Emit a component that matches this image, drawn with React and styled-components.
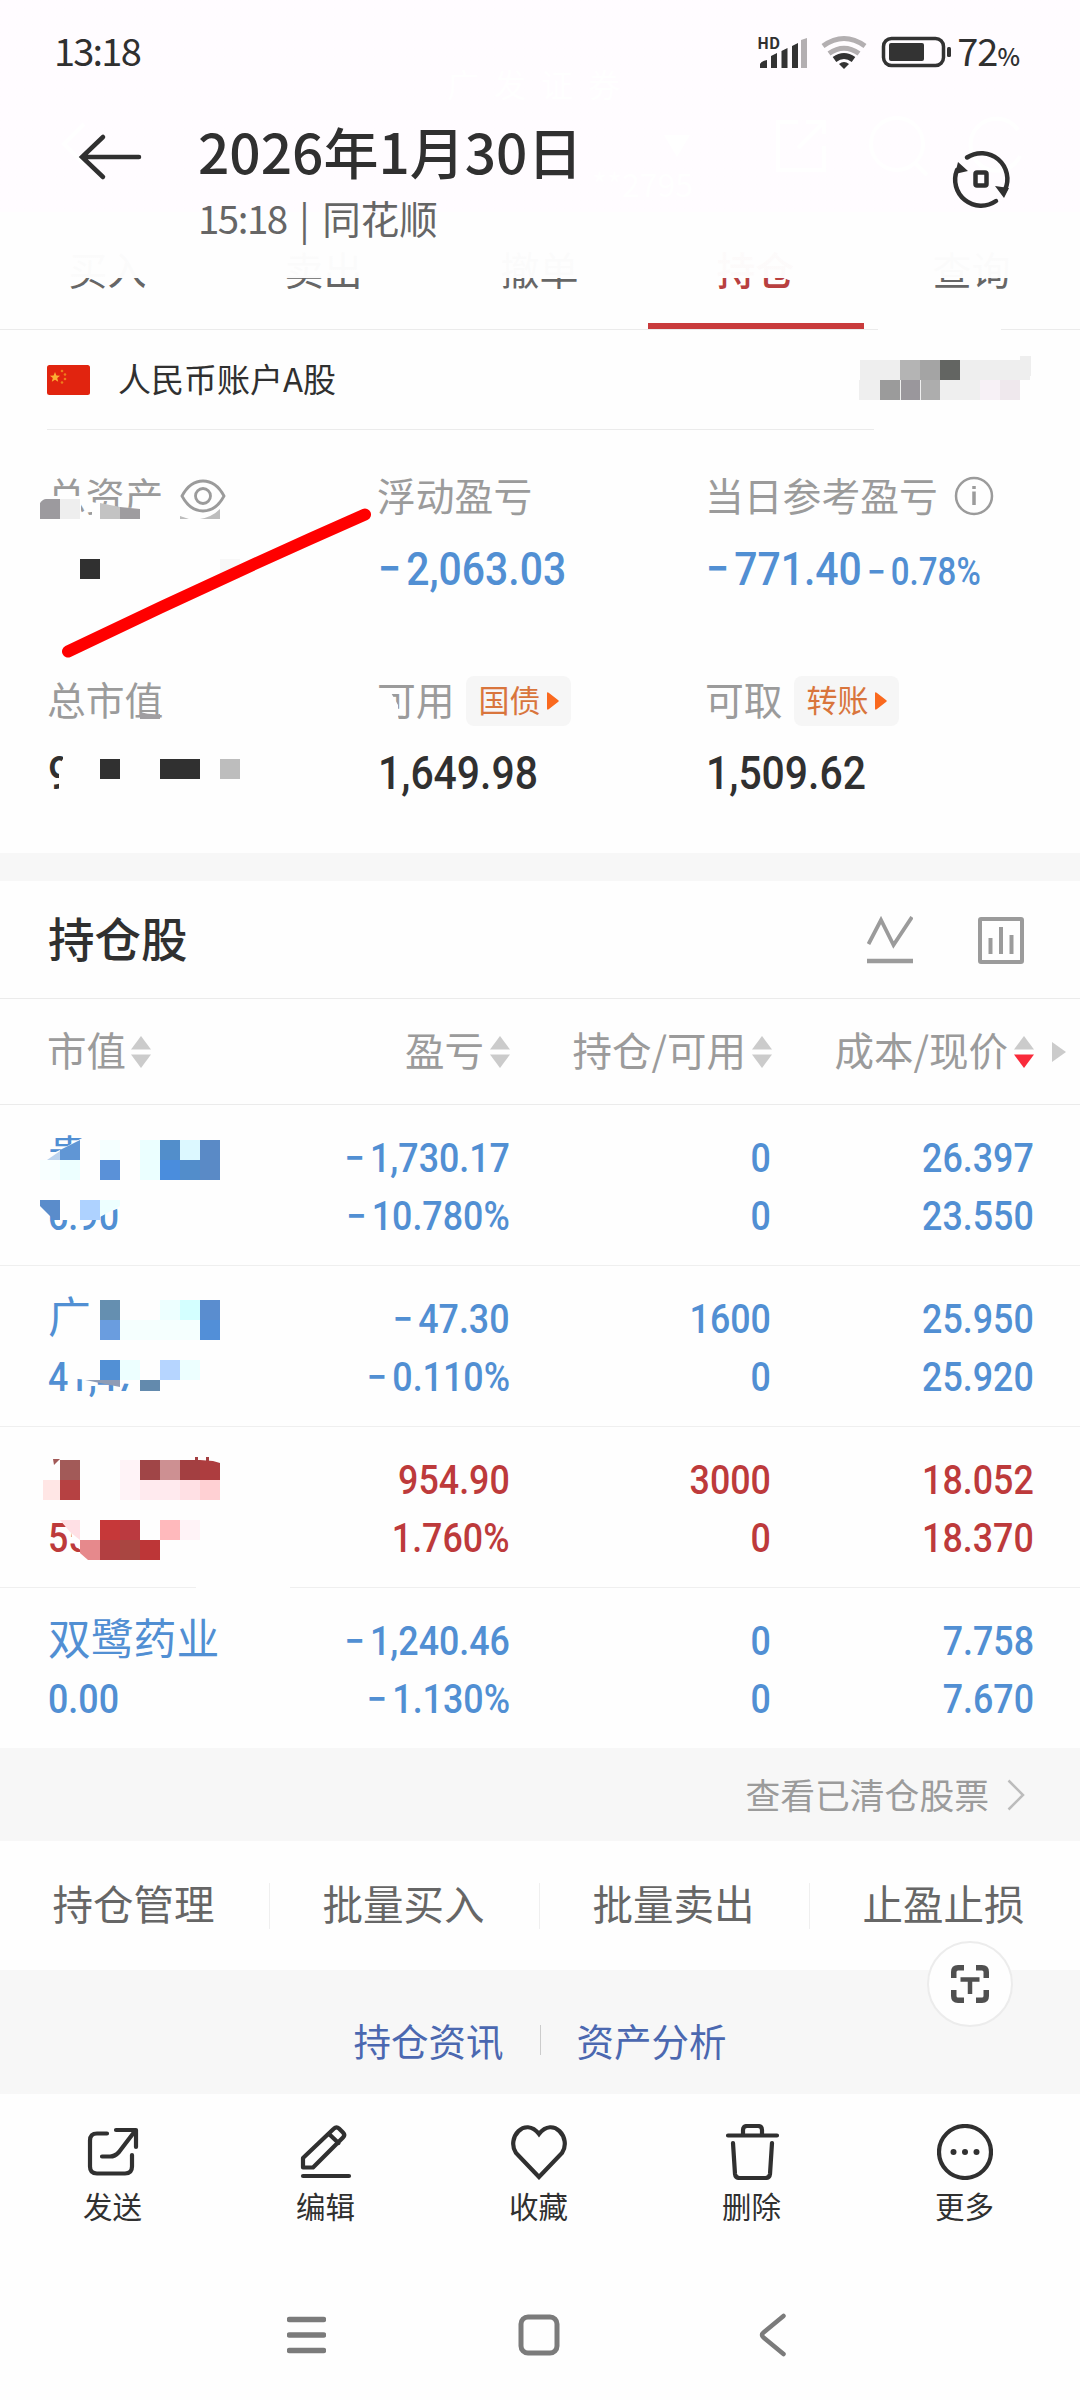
import React from "react";
import styled, { createGlobalStyle } from "styled-components";

const BLUE = "#518fd3";
const RED = "#bd3a3b";

const tabs = ["买入", "卖出", "撤单", "持仓", "查询"];

const columns = [
  { label: "市值" },
  { label: "盈亏" },
  { label: "持仓/可用" },
  { label: "成本/现价", sorted: true },
];

// mosaic blocks are [x, y, width, height, color], relative to the row
const holdings = [
  {
    name: "贵",
    value: "6.90",
    profit: ["−1,730.17", "−10.780%"],
    amount: ["0", "0"],
    price: ["26.397", "23.550"],
    masks: ["40,56 47,51 60,45 84,32 120,26 120,75 40,75", "50,94 120,94 119,103 90,115 55,115"],
    blocks: [
      [100, 35, 20, 20, "#f5ffff"],
      [140, 35, 20, 40, "#ebffff"],
      [160, 35, 20, 20, "#528ecb"],
      [180, 35, 20, 20, "#dcf8ff"],
      [200, 35, 20, 40, "#5a8ac6"],
      [40, 55, 20, 20, "#f8ffff"],
      [60, 55, 20, 20, "#edffff"],
      [100, 55, 20, 20, "#5a91d8"],
      [160, 55, 20, 20, "#4a8ddd"],
      [180, 55, 20, 20, "#528dcb"],
      [80, 95, 20, 20, "#aed2ff"],
    ],
    shapes: [
      ["60,45 80,35 80,55 60,55", "#6096d5"],
      ["47,55 60,46 60,55", "#bdd3ee"],
      ["40,95 60,95 60,115 54,115 40,101", "#5a8ccb"],
      ["100,95 120,95 120,101 100,112", "#edffff"],
    ],
  },
  {
    name: "广",
    value: "41,47",
    profit: ["−47.30", "−0.110%"],
    amount: ["1600", "0"],
    price: ["25.950", "25.920"],
    masks: ["70,90 150,90 150,120 78,113 70,112"],
    blocks: [
      [100, 34, 20, 20, "#658fb0"],
      [160, 34, 20, 20, "#edffff"],
      [180, 34, 20, 20, "#d3ffff"],
      [200, 34, 20, 20, "#5a8dcf"],
      [100, 54, 20, 20, "#6a9ddf"],
      [120, 54, 80, 20, "#f5fffe"],
      [200, 54, 20, 20, "#528fd8"],
      [100, 94, 20, 20, "#5290d5"],
      [120, 94, 20, 20, "#edffff"],
      [160, 94, 20, 20, "#b6d5ff"],
      [180, 94, 20, 20, "#edffff"],
      [140, 114, 20, 11, "#638aad"],
    ],
    shapes: [["85,114 120,114 120,121", "#8f9cb5"]],
  },
  {
    up: true,
    name: "",
    value: "55",
    profit: ["954.90", "1.760%"],
    amount: ["3000", "0"],
    price: ["18.052", "18.370"],
    masks: ["60,93 100,93 100,132 79,122 72,113 71,104"],
    blocks: [
      [60, 33, 20, 20, "#a25a58"],
      [120, 33, 20, 40, "#fff3f7"],
      [140, 33, 20, 20, "#a04547"],
      [160, 33, 20, 20, "#cd9092"],
      [180, 33, 20, 20, "#a33f41"],
      [43, 53, 17, 20, "#ffe6e5"],
      [60, 53, 20, 20, "#b64142"],
      [140, 53, 40, 20, "#ffeaee"],
      [180, 53, 20, 20, "#ffe0e4"],
      [200, 53, 20, 20, "#ffd0d3"],
      [195, 30, 3, 4, "#a33f41"],
      [206, 30, 3, 4, "#a33f41"],
      [100, 93, 20, 20, "#c63839"],
      [120, 93, 20, 20, "#bb3a40"],
      [160, 93, 20, 20, "#ffb9bc"],
      [180, 93, 20, 20, "#fff3f7"],
      [100, 113, 20, 20, "#b23f41"],
      [120, 113, 20, 20, "#a94641"],
      [140, 113, 20, 20, "#bd3637"],
    ],
    shapes: [
      ["53,32 60,32 54,38", "#a25a58"],
      ["200,33 213,34 220,36 220,53 200,53", "#ad3d3f"],
      ["60,93 80,93 80,113 70,105", "#ffe0e5"],
      ["80,113 100,113 100,133 88,133 80,126", "#e6898c"],
    ],
  },
  {
    name: "双鹭药业",
    value: "0.00",
    profit: ["−1,240.46", "−1.130%"],
    amount: ["0", "0"],
    price: ["7.758", "7.670"],
  },
];

function Mosaic({ width, height, masks = [], blocks = [], shapes = [] }) {
  return (
    <Overlay width={width} height={height}>
      {masks.map((points) => (
        <polygon key={points} points={points} fill="#fefefe" />
      ))}
      {blocks.map(([x, y, w, h, fill]) => (
        <rect key={`${x}-${y}`} x={x} y={y} width={w} height={h} fill={fill} />
      ))}
      {shapes.map(([points, fill]) => (
        <polygon key={points} points={points} fill={fill} />
      ))}
    </Overlay>
  );
}

// the minus sign is set a little wider than the digits
function Signed({ text }) {
  if (!text.startsWith("−")) return text;
  return (
    <>
      <Minus>−</Minus>
      {text.slice(1)}
    </>
  );
}

function Figure({ children, small, ...rest }) {
  return (
    <Num {...rest}>
      <Signed text={children} />
      {small && (
        <small>
          <Signed text={small} />
        </small>
      )}
    </Num>
  );
}

function StatusIcons() {
  return (
    <svg width="196" height="40" viewBox="757 32 196 40" fill="none">
      <g fill="#333">
        <path d="M760 68v-4q1-3 7-4v8zM771 68V56l6-3v15zM781.500 68V51l6-3v20zM792 68V46l6-3v25z" />
        <path d="M801 68V40l6-2v30z" fill="#b3afb1" />
      </g>
      <g strokeWidth="5">
        <path d="M823 46q21-15 42 0" stroke="#b3afb1" />
        <path d="M829 53.500q15-10.500 30 0" stroke="#b3afb1" />
        <path d="M834.500 59.500q9.500-7 19 0" stroke="#333" strokeWidth="6" />
        <path d="M839 64q5-4 10 0l-5 5z" fill="#333" />
      </g>
      <rect x="883.500" y="38.500" width="60" height="27" rx="8" stroke="#333" strokeWidth="3.500" />
      <rect x="889" y="43" width="35" height="18" rx="2" fill="#333" />
      <rect x="947" y="47" width="4" height="10" rx="1.500" fill="#333" />
    </svg>
  );
}

function SortArrows({ sorted }) {
  return (
    <svg width="20" height="32" viewBox="0 0 20 32">
      <path d="M10 0l10 13.500H0z" fill="#cbcbcb" />
      <path d="M0 18.500h20L10 32z" fill={sorted ? "#f92a3a" : "#cbcbcb"} />
    </svg>
  );
}

function Caret() {
  return (
    <svg width="12" height="18" viewBox="0 0 12 18">
      <path d="M0 1.500Q0-.5 2 1l9 7q1.500 1 0 2l-9 7q-2 1.500-2-.5z" fill="#fa691e" />
    </svg>
  );
}

const tools = [
  {
    label: "发送",
    icon: (
      <>
        <path d="M22 9.500h-10q-7 0-7 7v26q0 7 7 7h28q7 0 7-7V31" />
        <path d="M31 6h20V23M50 7L34 28q-4 4.500-9 4.500h-8" />
      </>
    ),
  },
  {
    label: "编辑",
    icon: (
      <>
        <path d="M5 43.500V34L36 4.500q2.500-2.500 5 0l4 4q2.500 2.500 0 5L15 43.500zM31 10l9.500 9" />
        <path d="M5 52h46" />
      </>
    ),
  },
  {
    label: "收藏",
    icon: <path d="M28 53L5 29C-5 14 14-8 28 10C42-8 61 14 51 29z" strokeLinejoin="miter" />,
  },
  {
    label: "删除",
    icon: <path d="M4 11.500h49M19 10V6q0-4 4-4h11q4 0 4 4v4M9 19l2 31q.5 4 4.500 4h26q4 0 4.500-4l2-31" />,
  },
  {
    label: "更多",
    icon: (
      <>
        <circle cx="28" cy="28" r="26" />
        <g fill="#303030" stroke="none">
          <circle cx="16.500" cy="28" r="3" />
          <circle cx="28" cy="28" r="3" />
          <circle cx="39.500" cy="28" r="3" />
        </g>
      </>
    ),
  },
];

export default function App() {
  return (
    <Page>
      <GlobalStyle />
      <Header>
        {/* page underneath, barely visible through the bar */}
        <Overlay width="1080" height="212" fill="none" stroke="#fff" strokeWidth="4">
          <path d="M664 135h26l-13 22z" fill="#fff" stroke="none" />
          <path d="M798 122h-20v48h46v-24M806 122h18v12M824 122l-26 26" />
          <circle cx="897" cy="144" r="26" />
          <path d="M915 163l12 12M1018 130a26 26 0 1 0 2 26M84 124l-20 20 20 20" />
        </Overlay>
        <Broker>广发证券</Broker>
        <BrokerAccount>**2795</BrokerAccount>
        <StatusBar>
          <Clock>13:18</Clock>
          <StatusRight>
            <Hd>HD</Hd>
            <StatusIcons />
            <Battery>
              72<small>%</small>
            </Battery>
          </StatusRight>
        </StatusBar>
        <TitleBar>
          <svg width="66" height="50" viewBox="0 0 66 50" fill="none" stroke="#303030" strokeWidth="4.500">
            <path d="M61 25H4M25 5L4 25l21 20" strokeLinecap="round" />
          </svg>
          <Titles>
            <h1>2026年1月30日</h1>
            <p>
              <span>15:18</span> | 同花顺
            </p>
          </Titles>
          <svg width="60" height="60" viewBox="-30 -30 60 60" fill="none" stroke="#303030" strokeWidth="4.500">
            <path d="M-14-21.500A26 26 0 0 1 24 11M15 22A26 26 0 0 1-24-9" strokeLinecap="round" />
            <path d="M14 7l14 2-5 10zM-23-17l10 9-13 3z" fill="#303030" stroke="none" />
            <rect x="-5.500" y="-6.500" width="11" height="13" rx="1.500" />
          </svg>
        </TitleBar>
      </Header>

      <Tabs>
        {tabs.map((tab) => (
          <Tab key={tab} $active={tab === "持仓"}>
            {tab}
          </Tab>
        ))}
        <TabGap />
      </Tabs>

      <Account>
        <svg width="43" height="30" viewBox="0 0 43 30">
          <rect width="43" height="30" rx="2.500" fill="#e1240f" />
          <path d="M8 7l1.400 3.500 3.700.2-2.900 2.400 1 3.600L8 14.700l-3.200 2 1-3.600-2.900-2.400 3.700-.2z" fill="#fbb034" />
          <g fill="#ee7d1c">
            <circle cx="15" cy="6" r="1.300" />
            <circle cx="18" cy="9.500" r="1.300" />
            <circle cx="18" cy="14" r="1.300" />
            <circle cx="15" cy="17.500" r="1.300" />
          </g>
        </svg>
        <span>人民币账户A股</span>
        <Mosaic
          width={1080}
          height={100}
          blocks={[
            [860, 30, 170, 20, "#eee"],
            [1020, 26, 11, 20, "#eee"],
            [900, 30, 20, 20, "#b4b4b4"],
            [920, 30, 20, 20, "#a4a4a4"],
            [940, 30, 20, 20, "#636562"],
            [859, 50, 121, 20, "#efefef"],
            [880, 50, 20, 20, "#9b9b9b"],
            [901, 50, 19, 20, "#9a979c"],
            [921, 50, 19, 20, "#adadad"],
            [980, 50, 20, 20, "#f7f1f6"],
            [1000, 50, 20, 20, "#efe8ed"],
          ]}
        />
      </Account>

      <Assets>
        <Asset>
          <Label>
            总资产
            <Eye width="46" height="34" viewBox="0 0 46 34" fill="none" stroke="#9b9b9b" strokeWidth="2.800">
              <path d="M2 17Q10 2 23 2t21 15Q36 32 23 32T2 17z" />
              <circle cx="23" cy="17" r="7.500" />
            </Eye>
          </Label>
        </Asset>
        <Asset>
          <Label>浮动盈亏</Label>
          <Amount $color={BLUE}>
            <Figure $squeeze={0.87}>−2,063.03</Figure>
          </Amount>
        </Asset>
        <Asset>
          <Label>
            当日参考盈亏
            <Info width="40" height="40" viewBox="-20 -20 40 40" fill="none" stroke="#9b9b9b" strokeWidth="2.500">
              <circle r="18" />
              <path d="M0-4.500V9M0-10v3" strokeWidth="3.500" />
            </Info>
          </Label>
          <Amount $color={BLUE}>
            <Figure $squeeze={0.87} small="−0.78%">
              −771.40
            </Figure>
          </Amount>
        </Asset>
        <Asset>
          <Label>总市值</Label>
          <Amount>
            <Figure $squeeze={0.87}>9</Figure>
          </Amount>
        </Asset>
        <Asset>
          <Label>
            可用
            <Badge>
              国债 <Caret />
            </Badge>
          </Label>
          <Amount>
            <Figure $squeeze={0.87}>1,649.98</Figure>
          </Amount>
        </Asset>
        <Asset>
          <Label>
            可取
            <Badge>
              转账 <Caret />
            </Badge>
          </Label>
          <Amount>
            <Figure $squeeze={0.87}>1,509.62</Figure>
          </Amount>
        </Asset>
        {/* blurred amounts and the red pen stroke */}
        <Overlay width="1080" height="423" viewBox="0 430 1080 423">
          <path
            d="M46 497h35v25H46zM92 503l30 6 40-1v14H92zM130 509h34v10h-34zM63 750v10l-4 6v26h24v-42zM376 692l14 0 8 14v14h-22zM183 517h40v6h-40z"
            fill="#fefefe"
          />
          <path d="M40 504q3-4 6-4h14v20H40z" fill="#9c9a9e" />
          <path d="M60 500h20v20H60z" fill="#eee" />
          <path d="M100 504l20 4v12h-20z" fill="#c3c3c3" />
          <path d="M120 508l20 2v10h-20z" fill="#9e9c9f" />
          <path d="M180 517l9 3h-9zM200 520q12-2 20-10v10z" fill="#bdbdbd" />
          <path d="M140 713q10 3 20 2v5h-20z" fill="#a09ea1" />
          <path d="M80 560h20v20H80zM100 760h20v20h-20zM160 760h40v20h-40z" fill="#303030" />
          <path d="M220 760h20v20h-20z" fill="#bdbdbd" />
          <path d="M220 560h20v20h-20z" fill="#f7f7f7" />
          <path d="M68 652.500Q214 582 365 515.500" fill="none" stroke="#f00" strokeWidth="12" strokeLinecap="round" />
        </Overlay>
      </Assets>

      <HoldingsTitle>
        <h2>持仓股</h2>
        <svg width="46" height="48" viewBox="0 0 46 48" fill="none" stroke="#9b9b9b" strokeWidth="3.800">
          <path d="M1.500 28L14 4l12.500 25L45 1" />
          <path d="M0 45h46" strokeWidth="4.500" />
        </svg>
        <svg width="46" height="48" viewBox="0 0 46 48" fill="none" stroke="#9b9b9b" strokeWidth="4">
          <rect x="2" y="3" width="42" height="43" rx="1" />
          <path d="M12.500 22v16M23 11v27M33.500 19v19" />
        </svg>
      </HoldingsTitle>

      <TableHead>
        {columns.map(({ label, sorted }) => (
          <HeadCell key={label}>
            <span>{label}</span>
            <SortArrows sorted={sorted} />
          </HeadCell>
        ))}
        <svg width="14" height="20" viewBox="0 0 14 20">
          <path d="M0 0l14 10L0 20z" fill="#cbcbcb" />
        </svg>
      </TableHead>

      {holdings.map((row) => (
        <Row key={row.value} $color={row.up ? RED : BLUE}>
          <Cell $left>
            <Name>{row.name}</Name>
            <Figure $squeeze={0.895}>{row.value}</Figure>
          </Cell>
          {[row.profit, row.amount, row.price].map(([top, bottom], i) => (
            <Cell key={i}>
              <Figure $squeeze={0.895} $right>{top}</Figure>
              <Figure $squeeze={0.895} $right>{bottom}</Figure>
            </Cell>
          ))}
          {row.blocks && (
            <Mosaic width={240} height={160} masks={row.masks} blocks={row.blocks} shapes={row.shapes} />
          )}
          {row.up && <LineGap />}
        </Row>
      ))}

      <Cleared>
        <span>查看已清仓股票</span>
        <svg width="18" height="32" viewBox="0 0 18 32" fill="none" stroke="#bcbcbc" strokeWidth="2.500">
          <path d="M1.500 1.500L16 16 1.500 30.500" />
        </svg>
      </Cleared>

      <Actions>
        {["持仓管理", "批量买入", "批量卖出", "止盈止损"].map((label) => (
          <Action key={label}>{label}</Action>
        ))}
      </Actions>

      <Links>
        <a>持仓资讯</a>
        <a>资产分析</a>
        <ScanButton>
          <svg width="38" height="38" viewBox="0 0 38 38" fill="none" stroke="#505050" strokeWidth="5.500">
            <path d="M2.750 13V7q0-4.250 4.250-4.250h6M25 2.750h6q4.250 0 4.250 4.250v6M35.250 25v6q0 4.250-4.250 4.250h-6M13 35.250H7q-4.250 0-4.250-4.250v-6" />
            <path d="M9.500 14.500h19M19 14v15" strokeWidth="4.500" />
          </svg>
        </ScanButton>
      </Links>

      <Toolbar>
        {tools.map(({ label, icon }) => (
          <Tool key={label}>
            <svg
              width="56"
              height="56"
              viewBox="0 0 56 56"
              fill="none"
              stroke="#303030"
              strokeWidth="4.200"
              strokeLinecap="round"
              strokeLinejoin="round"
            >
              {icon}
            </svg>
            {label}
          </Tool>
        ))}
      </Toolbar>

      <NavBar>
        <svg width="39" height="44" viewBox="0 0 39 44" stroke="#7b7b7b" strokeWidth="5.500" strokeLinecap="round">
          <path d="M2.500 6.500h34M2.500 22h34M2.500 37.500h34" />
        </svg>
        <svg width="42" height="42" viewBox="0 0 42 42" fill="none" stroke="#7b7b7b" strokeWidth="5">
          <rect x="3" y="3" width="36" height="36" rx="7" />
        </svg>
        <svg width="27" height="44" viewBox="0 0 27 44" fill="none" stroke="#7b7b7b" strokeWidth="4.500">
          <path d="M24.500 3L4.500 19.500q-3 2.500 0 5L24.500 41" strokeLinecap="round" />
        </svg>
      </NavBar>
    </Page>
  );
}

const GlobalStyle = createGlobalStyle`
  body {
    margin: 0;
    background: #fefefe;
  }
`;

const Page = styled.div`
  width: 1080px;
  height: 2400px;
  overflow: hidden;
  background: #fefefe;
  color: #303030;
  font-family: "Noto Sans CJK SC", sans-serif;
  svg {
    display: block;
    flex-shrink: 0;
  }
`;

const Header = styled.header`
  position: relative;
  z-index: 1;
  box-sizing: border-box;
  height: 278px;
  background: linear-gradient(rgba(255, 252, 255, 0.98) 212px, rgba(254, 254, 254, 0.98) 212px);
`;

const Broker = styled.span`
  position: absolute;
  left: 447px;
  top: 60px;
  color: #fff;
  font-size: 32px;
  letter-spacing: 15px;
  line-height: 46px;
`;

const BrokerAccount = styled(Broker)`
  left: 592px;
  top: 160px;
  letter-spacing: 0;
`;

const StatusBar = styled.div`
  position: relative;
  display: flex;
  justify-content: space-between;
  padding: 32px 61px 0 54px;
  height: 40px;
  line-height: 40px;
  font-size: 38px;
`;

const Clock = styled.span`
  letter-spacing: -1.8px;
  line-height: 36px;
`;

const StatusRight = styled.div`
  position: relative;
  display: flex;
`;

const Hd = styled.span`
  position: absolute;
  left: 0;
  top: 2px;
  font: 700 15.5px/16px "Noto Sans CJK SC", sans-serif;
`;

const Battery = styled.span`
  display: flex;
  margin-left: 4px;
  letter-spacing: -1px;
  line-height: 36px;
  small {
    font-size: 24px;
    font-weight: 500;
    line-height: 47px;
  }
`;

const TitleBar = styled.div`
  position: relative;
  display: flex;
  padding: 60px 69px 0 78px;
  > svg:last-child {
    margin-top: 17px;
  }
`;

const Titles = styled.div`
  flex: 1;
  margin: -17px 0 0 54px;
  h1 {
    margin: 0;
    font-size: 55px;
    font-weight: 500;
    line-height: 70px;
  }
  p {
    margin: 4px 0 0;
    color: #666;
    font-size: 38.5px;
    line-height: 56px;
    white-space: pre;
    word-spacing: 4px;
  }
  span {
    letter-spacing: -1.5px;
  }
`;

const Tabs = styled.nav`
  position: relative;
  display: flex;
  box-sizing: border-box;
  height: 100px;
  margin-top: -48px;
  border-bottom: 1px solid #ebebeb;
`;

const Tab = styled.div`
  box-sizing: border-box;
  flex: 1;
  padding-right: 1px;
  border-bottom: 6px solid ${({ $active }) => ($active ? "#c93b3c" : "transparent")};
  color: ${({ $active }) => ($active ? "#b84040" : "#666")};
  font-size: 39px;
  font-weight: ${({ $active }) => ($active ? 500 : 400)};
  line-height: 77px;
  text-align: center;
`;

const TabGap = styled.i`
  position: absolute;
  left: 878px;
  bottom: -1px;
  width: 123px;
  height: 2px;
  background: #fefefe;
`;

const Account = styled.div`
  position: relative;
  display: flex;
  align-items: center;
  gap: 28px;
  height: 99px;
  padding-left: 47px;
  font-size: 33px;
  line-height: 46px;
  > span {
    margin-top: -4px;
  }
  &::after {
    content: "";
    position: absolute;
    left: 47px;
    bottom: -1px;
    width: 827px;
    height: 1px;
    background: #ebebeb;
  }
`;

const Overlay = styled.svg`
  position: absolute;
  left: 0;
  top: 0;
`;

const Assets = styled.section`
  position: relative;
  display: grid;
  grid-template-columns: 330px 328px 1fr;
  grid-template-rows: 204px 1fr;
  box-sizing: border-box;
  height: 424px;
  padding: 38px 0 0 47px;
`;

const Asset = styled.div`
  display: flex;
  flex-direction: column;
  gap: 20px;
`;

const Label = styled.div`
  display: flex;
  align-items: center;
  height: 54px;
  color: #9b9b9b;
  font-size: 38.8px;
  line-height: 54px;
  white-space: nowrap;
`;

const Eye = styled.svg`
  margin: 4px 0 0 17px;
`;

const Info = styled.svg`
  margin: 3px 0 0 16px;
`;

const Badge = styled.span`
  display: flex;
  align-items: center;
  box-sizing: border-box;
  width: 105px;
  height: 50px;
  margin: 5px 0 0 11px;
  padding: 0 0 3px 13px;
  border-radius: 8px;
  background: #f6f6f6;
  color: #d9753c;
  font-size: 31px;
  line-height: 44px;
  svg {
    margin: 3px 0 0 6px;
  }
`;

const Num = styled.span`
  display: block;
  width: max-content;
  font-family: Roboto, sans-serif;
  font-weight: 500;
  white-space: nowrap;
  transform: scaleX(${({ $squeeze }) => $squeeze});
  transform-origin: ${({ $right }) => ($right ? "right" : "left")};
`;

const Minus = styled.span`
  margin-right: 6px;
`;

const Amount = styled.div`
  margin-left: 1px;
  color: ${({ $color }) => $color || "#303030"};
  font-size: 47px;
  line-height: 56px;
  small {
    margin-left: 6px;
    font-size: 38px;
  }
`;

const HoldingsTitle = styled.div`
  display: flex;
  align-items: center;
  box-sizing: border-box;
  height: 146px;
  padding: 0 56px 0 48px;
  border-top: 28px solid #f7f7f7;
  border-bottom: 1px solid #ebebeb;
  h2 {
    flex: 1;
    margin: -6px 0 0;
    font-size: 46.5px;
    font-weight: 500;
    line-height: 60px;
  }
  svg + svg {
    margin-left: 65px;
  }
`;

const TableHead = styled.div`
  display: grid;
  grid-template-columns: 200px 262px 262px 262px 32px;
  align-items: center;
  box-sizing: border-box;
  height: 106px;
  padding-left: 48px;
  border-bottom: 1px solid #ebebeb;
  > svg {
    justify-self: end;
  }
`;

const HeadCell = styled.div`
  display: flex;
  align-items: center;
  justify-content: flex-end;
  gap: 6px;
  color: #9b9b9b;
  font-size: 39.5px;
  line-height: 56px;
  white-space: nowrap;
  &:first-child {
    justify-content: flex-start;
    gap: 5px;
    margin-left: -1px;
  }
  span {
    margin-top: -5px;
  }
`;

const Row = styled.div`
  position: relative;
  display: grid;
  grid-template-columns: 199px 263px 261px 263px;
  box-sizing: border-box;
  height: 161px;
  padding: 25px 0 0 48px;
  border-bottom: 1px solid #efefef;
  color: ${({ $color }) => $color};
  font-size: 40px;
  line-height: 58px;
  &:has(+ footer) {
    border-bottom: 0;
  }
`;

const Cell = styled.div`
  display: flex;
  flex-direction: column;
  align-items: ${({ $left }) => ($left ? "flex-start" : "flex-end")};
`;

const Name = styled.span`
  height: 58px;
  font-size: 42.8px;
  line-height: 46px;
  white-space: nowrap;
`;

const LineGap = styled.i`
  position: absolute;
  left: 196px;
  bottom: -1px;
  width: 94px;
  height: 1px;
  background: #fefefe;
`;

const Cleared = styled.footer`
  display: flex;
  align-items: center;
  justify-content: flex-end;
  gap: 18px;
  height: 93px;
  margin-top: -1px;
  padding-right: 55px;
  background: #f7f7f7;
  color: #9b9b9b;
  font-size: 34.8px;
  line-height: 50px;
  span {
    margin-top: -2px;
  }
`;

const Actions = styled.div`
  display: grid;
  grid-template-columns: repeat(4, 1fr);
  align-items: center;
  height: 129px;
`;

const Action = styled.div`
  height: 46px;
  padding-right: 3px;
  color: #666;
  font-size: 40.5px;
  line-height: 40px;
  text-align: center;
  & + & {
    box-shadow: -1px 0 #efefef;
  }
`;

const Links = styled.div`
  position: relative;
  display: flex;
  align-items: center;
  justify-content: center;
  height: 124px;
  background: #f7f7f7;
  a {
    padding: 0 36px;
    margin-top: 16px;
    color: #4b68b0;
    font-size: 37.5px;
    line-height: 30px;
  }
  a + a {
    border-left: 1px solid #ccc;
  }
`;

const ScanButton = styled.button`
  position: absolute;
  right: 67px;
  top: -29px;
  display: flex;
  align-items: center;
  justify-content: center;
  width: 86px;
  height: 86px;
  padding: 0;
  border: 2px solid #ececec;
  border-radius: 50%;
  background: #fefefe;
`;

const Toolbar = styled.div`
  display: grid;
  grid-template-columns: repeat(5, 213px);
  justify-content: center;
  height: 160px;
  padding: 30px 3px 0 0;
`;

const Tool = styled.div`
  display: flex;
  flex-direction: column;
  align-items: center;
  gap: 5px;
  font-size: 29.5px;
  line-height: 40px;
`;

const NavBar = styled.div`
  display: flex;
  align-items: center;
  height: 101px;
  padding-left: 287px;
  svg + svg {
    margin-left: 192px;
  }
  svg:last-child {
    margin-left: 199px;
  }
`;
